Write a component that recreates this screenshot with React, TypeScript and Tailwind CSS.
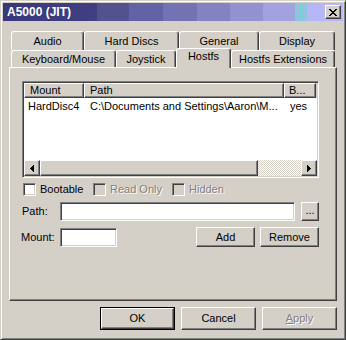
import React from "react";

const raised =
  "bg-[#d4d0c8] border border-t-white border-l-white border-r-[#404040] border-b-[#404040] shadow-[inset_-1px_-1px_0_#808080]";
const sunken =
  "border border-t-[#808080] border-l-[#808080] border-r-white border-b-white shadow-[inset_1px_1px_0_#404040,inset_-1px_-1px_0_#d4d0c8] p-px";
const tabBase =
  "flex items-center justify-center bg-[#d4d0c8] border-t border-l border-r border-t-white border-l-white border-r-[#404040] shadow-[inset_-1px_0_0_#808080] rounded-t-[3px] whitespace-nowrap";
const disabledText = "text-[#808080] [text-shadow:1px_1px_0_#fff]";

function LeftArrow() {
  return (
    <svg width="4" height="7" viewBox="0 0 4 7" shapeRendering="crispEdges">
      <rect x="0" y="3" width="1" height="1" fill="#000" />
      <rect x="1" y="2" width="1" height="3" fill="#000" />
      <rect x="2" y="1" width="1" height="5" fill="#000" />
      <rect x="3" y="0" width="1" height="7" fill="#000" />
    </svg>
  );
}

function RightArrow() {
  return (
    <svg width="4" height="7" viewBox="0 0 4 7" shapeRendering="crispEdges">
      <rect x="3" y="3" width="1" height="1" fill="#000" />
      <rect x="2" y="2" width="1" height="3" fill="#000" />
      <rect x="1" y="1" width="1" height="5" fill="#000" />
      <rect x="0" y="0" width="1" height="7" fill="#000" />
    </svg>
  );
}

function Checkbox({ label, disabled }: { label: string; disabled?: boolean }) {
  return (
    <div className="flex items-center">
      <div
        className={`w-[13px] h-[13px] box-border ${sunken} ${
          disabled ? "bg-[#d4d0c8]" : "bg-white"
        }`}
      />
      <span className={`ml-[4px] ${disabled ? disabledText : ""}`}>{label}</span>
    </div>
  );
}

export default function App() {
  return (
    <div className="w-[346px] h-[340px] box-border bg-[#d4d0c8] border border-t-[#d4d0c8] border-l-[#d4d0c8] border-r-[#404040] border-b-[#404040] shadow-[inset_1px_1px_0_#fff,inset_-1px_-1px_0_#808080] p-[2px] font-['Liberation_Sans',Arial,sans-serif] text-[11px] leading-[13px] text-black flex flex-col overflow-hidden">
      {/* Title bar */}
      <div className="h-[18px] flex items-center justify-between pl-[4px] pr-[2px] bg-[linear-gradient(90deg,#38387a_0,#3f3f82_94px,#52528f_94px,#52528f_126px,#6262a6_126px,#6262a6_160px,#7373b4_160px,#7373b4_194px,#8383c3_194px,#8383c3_227px,#9292d1_227px,#9292d1_260px,#a2a2e1_260px,#a2a2e1_292px,#7ccfd6_292px,#7ccfd6_295px,#a8b8ea_295px,#a8b8ea_296px,#7ccfd6_296px,#7ccfd6_298px,#a8b8ea_298px,#a8b8ea_299px,#7ccfd6_299px,#7ccfd6_301px,#a8b8ea_301px,#a8b8ea_302px,#7ccfd6_302px,#7ccfd6_304px,#b6b6f6_304px,#b8b8f8_100%)]">
        <span className="text-white font-bold text-[12px] leading-[14px]">A5000 (JIT)</span>
        <div className={`w-[16px] h-[14px] box-border flex items-center justify-center ${raised}`}>
          <svg width="8" height="7" viewBox="0 0 8 7" shapeRendering="crispEdges">
            <path d="M0 0h2v1h-2zM6 0h2v1h-2zM1 1h2v1h-2zM5 1h2v1h-2zM2 2h4v1h-4zM3 3h2v1h-2zM2 4h4v1h-4zM1 5h2v1h-2zM5 5h2v1h-2zM0 6h2v1h-2zM6 6h2v1h-2z" fill="#000" />
          </svg>
        </div>
      </div>

      {/* Body */}
      <div className="pl-[6px] pt-[10px] flex flex-col">
        {/* Tab row 1 */}
        <div className="flex ml-[2px] h-[19px]">
          <div className={`${tabBase} w-[73px] h-[19px]`}>Audio</div>
          <div className={`${tabBase} w-[95px] h-[19px]`}>Hard Discs</div>
          <div className={`${tabBase} w-[80px] h-[19px]`}>General</div>
          <div className={`${tabBase} w-[76px] h-[19px]`}>Display</div>
        </div>
        {/* Tab row 2 */}
        <div className="flex items-start ml-[2px] h-[17px]">
          <div className={`${tabBase} w-[105px] h-[17px]`}>Keyboard/Mouse</div>
          <div className={`${tabBase} w-[60px] h-[17px]`}>Joystick</div>
          <div className={`${tabBase} relative z-10 w-[55px] h-[20px] -mt-[2px] !items-start pt-[1px]`}>Hostfs</div>
          <div className={`${tabBase} w-[104px] h-[17px]`}>Hostfs Extensions</div>
        </div>

        {/* Panel */}
        <div className="w-[328px] h-[234px] box-border bg-[#d4d0c8] border border-t-white border-l-white border-r-[#404040] border-b-[#404040] shadow-[inset_-1px_-1px_0_#808080] flex flex-col pl-[12px] pt-[13px]">
          {/* List view */}
          <div className={`w-[297px] h-[97px] box-border bg-white flex flex-col ${sunken}`}>
            <div className="flex h-[15px] bg-[#d4d0c8] shrink-0">
              <div className={`w-[60px] h-[15px] box-border pl-[5px] flex items-center ${raised}`}>Mount</div>
              <div className={`w-[200px] h-[15px] box-border pl-[5px] flex items-center ${raised}`}>Path</div>
              <div className={`w-[32px] h-[15px] box-border pl-[4px] flex items-center ${raised}`}>B...</div>
              <div className="flex-1" />
            </div>
            <div className="flex-1 bg-white">
              <div className="flex h-[16px] items-center">
                <div className="w-[60px] pl-[4px] whitespace-nowrap">HardDisc4</div>
                <div className="w-[200px] pl-[6px] whitespace-nowrap overflow-hidden">
                  C:\Documents and Settings\Aaron\M...
                </div>
                <div className="w-[32px] pl-[6px]">yes</div>
              </div>
            </div>
            <div className="flex h-[16px] shrink-0">
              <div className={`w-[16px] h-[16px] box-border flex items-center justify-center ${raised}`}>
                <LeftArrow />
              </div>
              <div className={`w-[218px] h-[16px] box-border ${raised}`} />
              <div className="flex-1 h-[16px] bg-[conic-gradient(#fff_25%,#d4d0c8_0_50%,#fff_0_75%,#d4d0c8_0)] bg-[length:2px_2px]" />
              <div className={`w-[16px] h-[16px] box-border flex items-center justify-center ${raised}`}>
                <RightArrow />
              </div>
            </div>
          </div>

          {/* Checkboxes */}
          <div className="flex items-center h-[13px] mt-[5px] ml-[1px]">
            <div className="w-[70px]">
              <Checkbox label="Bootable" />
            </div>
            <div className="w-[79px]">
              <Checkbox label="Read Only" disabled />
            </div>
            <div>
              <Checkbox label="Hidden" disabled />
            </div>
          </div>

          {/* Path row */}
          <div className="flex items-center h-[19px] mt-[6px]">
            <span className="w-[38px]">Path:</span>
            <div className={`w-[235px] h-[19px] box-border bg-white ${sunken}`} />
            <div className={`ml-[6px] w-[18px] h-[19px] box-border flex items-center justify-center pb-[2px] ${raised}`}>
              ...
            </div>
          </div>

          {/* Mount row */}
          <div className="flex items-start h-[20px] mt-[6px]">
            <span className="w-[38px] -ml-px pl-0 h-[20px] flex items-center mr-px">Mount:</span>
            <div className={`mt-[1px] w-[57px] h-[19px] box-border bg-white ${sunken}`} />
            <div className={`ml-[79px] w-[59px] h-[20px] box-border flex items-center justify-center ${raised}`}>
              Add
            </div>
            <div className={`ml-[5px] w-[59px] h-[20px] box-border flex items-center justify-center ${raised}`}>
              Remove
            </div>
          </div>
        </div>

        {/* Dialog buttons */}
        <div className="w-[328px] flex justify-end gap-[6px] mt-[6px]">
          <div className="w-[75px] h-[23px] box-border border border-black flex">
            <div className={`flex-1 box-border flex items-center justify-center ${raised}`}>OK</div>
          </div>
          <div className={`w-[75px] h-[23px] box-border flex items-center justify-center ${raised}`}>Cancel</div>
          <div className={`w-[75px] h-[23px] box-border flex items-center justify-center ${raised}`}>
            <span className={disabledText}>
              <span className="underline">A</span>pply
            </span>
          </div>
        </div>
      </div>
    </div>
  );
}
